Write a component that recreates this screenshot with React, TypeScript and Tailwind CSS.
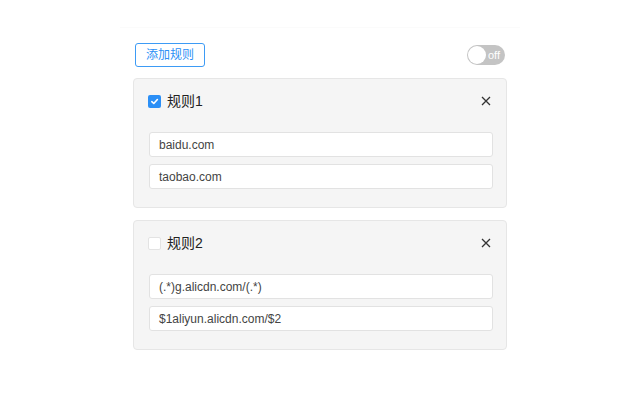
import React from "react";

type Rule = { name: string; enabled: boolean; from: string; to: string };

const rules: Rule[] = [
  { name: "规则1", enabled: true, from: "baidu.com", to: "taobao.com" },
  { name: "规则2", enabled: false, from: "(.*)g.alicdn.com/(.*)", to: "$1aliyun.alicdn.com/$2" },
];

function Checkbox({ checked }: { checked: boolean }) {
  if (checked) {
    return (
      <span className="-ml-[1px] flex h-[13px] w-[13px] items-center justify-center rounded-[2px] bg-[#2b8ff6]">
        <svg width="9" height="9" viewBox="0 0 10 10" fill="none">
          <path d="M2 5.2 L4.2 7.2 L8.2 2.8" stroke="#fff" strokeWidth="1.8" strokeLinecap="round" strokeLinejoin="round" />
        </svg>
      </span>
    );
  }
  return <span className="-ml-[1px] h-[13px] w-[13px] rounded-[2px] border border-[#e3e3e3] bg-white" />;
}

function RuleCard({ rule }: { rule: Rule }) {
  return (
    <div className="rounded-[4px] border border-[#e6e6e6] bg-[#f5f5f5] pl-[15px] pr-[13px] pt-[15px] pb-[18px]">
      <div className="flex h-[14px] items-center">
        <Checkbox checked={rule.enabled} />
        <span className="ml-[6px] text-[14px] leading-none text-[#222]">{rule.name}</span>
        <svg className="ml-auto mr-[2px]" width="10" height="10" viewBox="0 0 10 10">
          <path d="M1 1 L9 9 M9 1 L1 9" stroke="#333" strokeWidth="1.3" />
        </svg>
      </div>
      <div className="mt-[24px] flex flex-col gap-[7px]">
        <div className="flex h-[25px] items-center rounded-[3px] border border-[#e2e2e2] bg-white px-[9px] text-[12px] text-[#444]">
          {rule.from}
        </div>
        <div className="flex h-[25px] items-center rounded-[3px] border border-[#e2e2e2] bg-white px-[9px] text-[12px] text-[#444]">
          {rule.to}
        </div>
      </div>
    </div>
  );
}

export default function App() {
  return (
    <div
      className="min-h-[400px] w-full bg-white pt-[27px]"
      style={{ fontFamily: '"Liberation Sans", "Noto Sans CJK SC", sans-serif' }}
    >
      <div className="mx-auto w-[400px] border-t border-[#fbfbfb] px-[13px] pt-[15px]">
        <div className="flex items-center justify-between pl-[2px] pr-[2px]">
          <button className="flex h-[24px] w-[70px] items-center justify-center rounded-[3px] border border-[#3d9bf5] text-[12px] text-[#2b8ff6]">
            添加规则
          </button>
          <div className="flex h-[20px] w-[38px] items-center rounded-full bg-[#c4c4c4] p-[1px]">
            <span className="h-[18px] w-[18px] rounded-full bg-white" />
            <span className="ml-[2px] text-[11px] leading-none text-white">off</span>
          </div>
        </div>
        <div className="mt-[11px] flex flex-col gap-[12px]">
          {rules.map((r) => (
            <RuleCard key={r.name} rule={r} />
          ))}
        </div>
      </div>
    </div>
  );
}
